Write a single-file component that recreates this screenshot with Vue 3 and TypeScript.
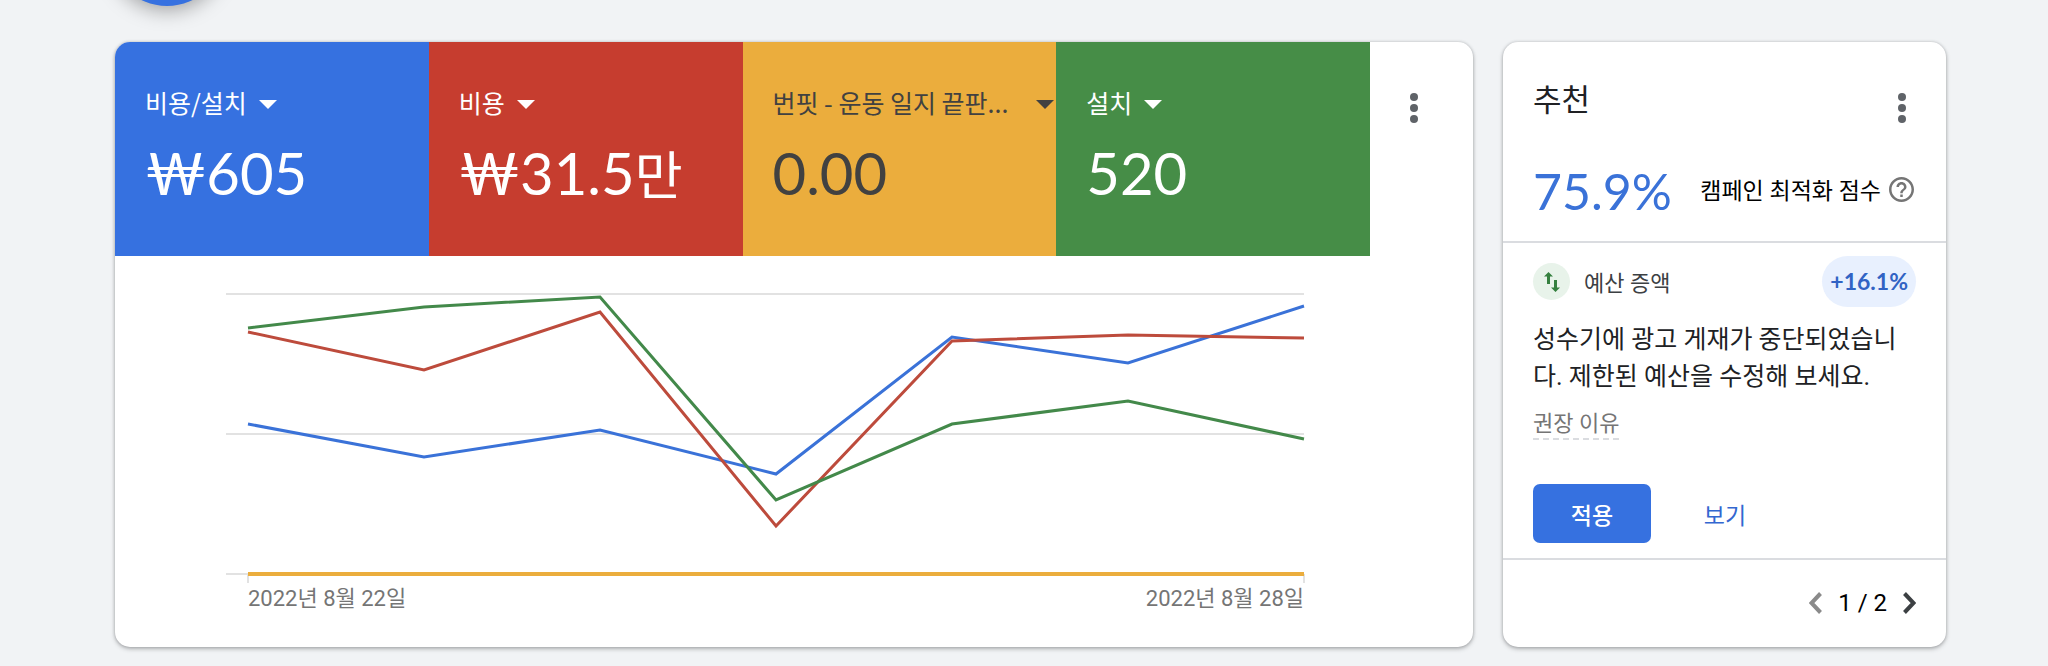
<script setup lang="ts">
interface Metric {
  id: string
  label: string
  amount: string
  unit?: string
  tone: string
}

interface Series {
  tone: string
  values: number[]
}

const metrics: Metric[] = [
  { id: 'cpi', label: '비용/설치', amount: '₩605', tone: 'blue' },
  { id: 'cost', label: '비용', amount: '₩31.5', unit: '만', tone: 'red' },
  { id: 'event', label: '번핏 - 운동 일지 끝판...', amount: '0.00', tone: 'yellow' },
  { id: 'install', label: '설치', amount: '520', tone: 'green' },
]

const plot = { width: 1078, height: 280, inset: 22 }

const series: Series[] = [
  { tone: 'blue', values: [150, 117, 144, 100, 237, 211, 268] },
  { tone: 'red', values: [242, 204, 262, 48, 233, 239, 236] },
  { tone: 'green', values: [246, 267, 277, 74, 150, 173, 135] },
  { tone: 'yellow', values: [0, 0, 0, 0, 0, 0, 0] },
]

const gridLines = [0, 140, 280]

function points(values: number[]): string {
  const step = (plot.width - plot.inset) / (values.length - 1)
  return values.map((v, i) => `${plot.inset + i * step},${plot.height - v}`).join(' ')
}
</script>

<template>
  <div class="page">
    <button class="fab" type="button" aria-label="새 캠페인"></button>
    <main class="cards">
      <section class="card overview">
        <div class="metrics">
          <div v-for="m in metrics" :key="m.id" class="metric" :class="m.tone">
            <button class="metric-select" type="button">
              <span class="metric-label" :class="{ long: m.label.length > 10 }">{{ m.label }}</span>
              <svg class="caret" viewBox="0 0 18 9" aria-hidden="true"><path d="M0 0h18L9 9z" /></svg>
            </button>
            <div class="metric-value">{{ m.amount }}<span v-if="m.unit" class="unit">{{ m.unit }}</span></div>
          </div>
          <button class="more" type="button" aria-label="더보기">
            <svg viewBox="0 0 8 30" aria-hidden="true">
              <circle cx="4" cy="4" r="4" /><circle cx="4" cy="15" r="4" /><circle cx="4" cy="26" r="4" />
            </svg>
          </button>
        </div>
        <div class="chart">
          <svg class="plot" :viewBox="`0 0 ${plot.width} ${plot.height}`" preserveAspectRatio="none" aria-hidden="true">
            <line v-for="y in gridLines" :key="y" class="grid" x1="0" :x2="plot.width" :y1="y" :y2="y" />
            <line class="grid" :x1="plot.inset" :x2="plot.inset" y1="280" y2="289" />
            <line class="grid" :x1="plot.width" :x2="plot.width" y1="280" y2="289" />
            <polyline v-for="s in series" :key="s.tone" class="line" :class="s.tone" :points="points(s.values)" />
          </svg>
          <div class="axis"><span>2022년 8월 22일</span><span>2022년 8월 28일</span></div>
        </div>
      </section>

      <aside class="card advice">
        <header class="advice-head">
          <h2>추천</h2>
          <button class="more" type="button" aria-label="더보기">
            <svg viewBox="0 0 8 30" aria-hidden="true">
              <circle cx="4" cy="4" r="4" /><circle cx="4" cy="15" r="4" /><circle cx="4" cy="26" r="4" />
            </svg>
          </button>
        </header>
        <div class="score">
          <span class="score-value">75.9%</span>
          <span class="score-label">캠페인 최적화 점수</span>
          <button class="help" type="button" aria-label="도움말">
            <svg viewBox="2 2 20 20" aria-hidden="true">
              <path d="M11 18h2v-2h-2v2zm1-16C6.48 2 2 6.48 2 12s4.480 10 10 10 10-4.480 10-10S17.520 2 12 2zm0 18c-4.410 0-8-3.590-8-8s3.590-8 8-8 8 3.590 8 8-3.590 8-8 8zm0-14c-2.210 0-4 1.790-4 4h2c0-1.100.9-2 2-2s2 .9 2 2c0 2-3 1.750-3 5h2c0-2.250 3-2.500 3-5 0-2.210-1.790-4-4-4z" />
            </svg>
          </button>
        </div>
        <div class="item">
          <div class="item-head">
            <span class="item-icon">
              <svg viewBox="0 0 16 20" aria-hidden="true">
                <path d="M4.500 0L9 4.500H6V12H3V4.500H0zM11.500 20L7 15.500h3V8h3v7.500h3z" />
              </svg>
            </span>
            <span class="item-type">예산 증액</span>
            <span class="badge">+16.1%</span>
          </div>
          <p class="item-text">성수기에 광고 게재가 중단되었습니다. 제한된 예산을 수정해 보세요.</p>
          <button class="reason" type="button">권장 이유</button>
          <div class="actions">
            <button class="apply" type="button">적용</button>
            <button class="view" type="button">보기</button>
          </div>
        </div>
        <nav class="pager" aria-label="추천 페이지">
          <button class="arrow prev" type="button" aria-label="이전">
            <svg viewBox="0 0 13 22" aria-hidden="true"><path d="M11.500 1.500L2.500 11l9 9.500" /></svg>
          </button>
          <span>1 / 2</span>
          <button class="arrow" type="button" aria-label="다음">
            <svg viewBox="0 0 13 22" aria-hidden="true"><path d="M1.500 1.500l9 9.500-9 9.500" /></svg>
          </button>
        </nav>
      </aside>
    </main>
  </div>
</template>

<style>
body {
  margin: 0;
  background: #f1f3f5;
}
</style>

<style scoped>
.page {
  position: relative;
  min-height: 100vh;
  box-sizing: border-box;
  padding: 42px 102px 19px 115px;
  overflow: hidden;
  font-family: Roboto, "Noto Sans CJK KR", sans-serif;
  color: #202124;
}
button {
  margin: 0;
  padding: 0;
  border: 0;
  background: none;
  font: inherit;
  color: inherit;
  cursor: pointer;
}
svg {
  display: block;
}
.fab {
  position: absolute;
  top: -110px;
  left: 109px;
  width: 116px;
  height: 116px;
  border-radius: 50%;
  background: #3671e0;
  box-shadow: 0 4px 20px rgba(0, 0, 0, 0.35);
}
.cards {
  position: relative;
  display: flex;
  align-items: stretch;
  gap: 30px;
}
.card {
  border-radius: 15px;
  background: #fff;
  box-shadow: 0 2px 4px rgba(60, 64, 67, 0.35), 0 0 3px rgba(60, 64, 67, 0.25);
}
.overview {
  flex: 1;
  min-width: 0;
}
.metrics {
  display: grid;
  grid-template-columns: repeat(4, minmax(0, 1fr)) 103px;
  height: 214px;
  border-radius: 15px 15px 0 0;
  overflow: hidden;
}
.metric {
  padding: 41px 0 0 30px;
  color: #fff;
}
.metric.blue { background: #3671e0; }
.metric.red { background: #c63d2f; }
.metric.yellow { background: #ebad3d; color: #414141; }
.metric.green { background: #468d47; }
.metric-select {
  display: flex;
  align-items: center;
  gap: 12px;
  height: 38px;
  font-family: "Noto Sans CJK KR", sans-serif;
  font-size: 25px;
  line-height: 36px;
}
.metric-label {
  white-space: nowrap;
}
.metric-label.long {
  width: 251px;
  text-align: left;
}
.caret {
  flex: none;
  width: 18px;
  height: 9px;
  margin-top: 4px;
  fill: currentColor;
}
.metric-value {
  margin-top: 16px;
  font-family: Lato, "Noto Sans CJK KR", sans-serif;
  font-size: 58px;
  line-height: 72px;
  white-space: nowrap;
}
.unit {
  font-size: 52px;
  line-height: 1;
}
.more {
  width: 48px;
  height: 48px;
  display: grid;
  place-items: center;
}
.more svg {
  width: 8px;
  height: 30px;
  fill: #5f6368;
}
.metrics .more {
  margin: 42px 0 0 20px;
}
.chart {
  padding: 38px 169px 32px 111px;
}
.plot {
  width: 100%;
  height: 280px;
  overflow: visible;
}
.grid {
  stroke: #e2e2e2;
  stroke-width: 2;
  vector-effect: non-scaling-stroke;
}
.line {
  fill: none;
  stroke-width: 3;
  vector-effect: non-scaling-stroke;
}
.line.blue { stroke: #3a72d8; }
.line.red { stroke: #bd4b3c; }
.line.green { stroke: #43894a; }
.line.yellow { stroke: #ebad3d; stroke-width: 4; }
.axis {
  display: flex;
  justify-content: space-between;
  margin-top: 9px;
  padding-left: 22px;
  font-size: 22px;
  line-height: 32px;
  color: #757575;
}
.advice {
  flex: none;
  width: 443px;
  display: flex;
  flex-direction: column;
}
.advice-head {
  display: flex;
  justify-content: space-between;
  padding: 37px 20px 0 30px;
}
.advice-head .more {
  margin-top: 5px;
}
h2 {
  margin: 0;
  font-size: 31px;
  font-weight: 400;
  line-height: 44px;
}
.score {
  display: flex;
  align-items: center;
  padding: 28px 32px 19px 30px;
  color: #000;
}
.score-value {
  font-family: Lato, sans-serif;
  font-size: 50px;
  line-height: 62px;
  color: #3a72d8;
}
.score-label {
  margin-left: auto;
  padding-bottom: 4px;
  font-size: 23px;
  white-space: nowrap;
}
.help {
  margin-left: 8px;
  padding-bottom: 4px;
}
.help svg {
  width: 25px;
  height: 25px;
  fill: #757575;
}
.item {
  flex: 1;
  padding: 13px 30px 14px;
  border-top: 2px solid #dadce0;
  border-bottom: 2px solid #dadce0;
}
.item-head {
  display: flex;
  align-items: center;
}
.item-icon {
  display: grid;
  place-items: center;
  width: 37px;
  height: 37px;
  border-radius: 50%;
  background: #e8f3ea;
}
.item-icon svg {
  width: 16px;
  height: 20px;
  fill: #35803f;
}
.item-type {
  margin-left: 14px;
  padding-bottom: 2px;
  font-size: 22px;
  color: #3c4043;
}
.badge {
  margin-left: auto;
  padding: 0 8px;
  border-radius: 26px;
  background: #e8f0fe;
  font-family: Lato, sans-serif;
  font-size: 23px;
  font-weight: 700;
  line-height: 51px;
  color: #3163c4;
}
.item-text {
  margin: 14px 0 0;
  font-size: 25px;
  line-height: 37px;
  word-break: break-all;
}
.reason {
  display: block;
  margin-top: 14px;
  border-bottom: 2px dashed #dadce0;
  font-size: 22px;
  line-height: 29px;
  color: #757575;
}
.actions {
  display: flex;
  gap: 12px;
  margin-top: 44px;
  font-size: 23px;
}
.apply,
.view {
  width: 118px;
  height: 59px;
  border-radius: 7px;
}
.apply {
  background: #3671e0;
  color: #fff;
  font-weight: 500;
}
.view {
  width: 124px;
  color: #3367d0;
}
.pager {
  display: flex;
  align-items: center;
  justify-content: flex-end;
  gap: 16px;
  padding: 0 30px 2px;
  height: 85px;
  font-size: 24px;
  color: #000;
}
.arrow svg {
  width: 13px;
  height: 22px;
  fill: none;
  stroke: #3c4043;
  stroke-width: 4;
}
.arrow.prev svg {
  stroke: #8a8a8a;
}
</style>
